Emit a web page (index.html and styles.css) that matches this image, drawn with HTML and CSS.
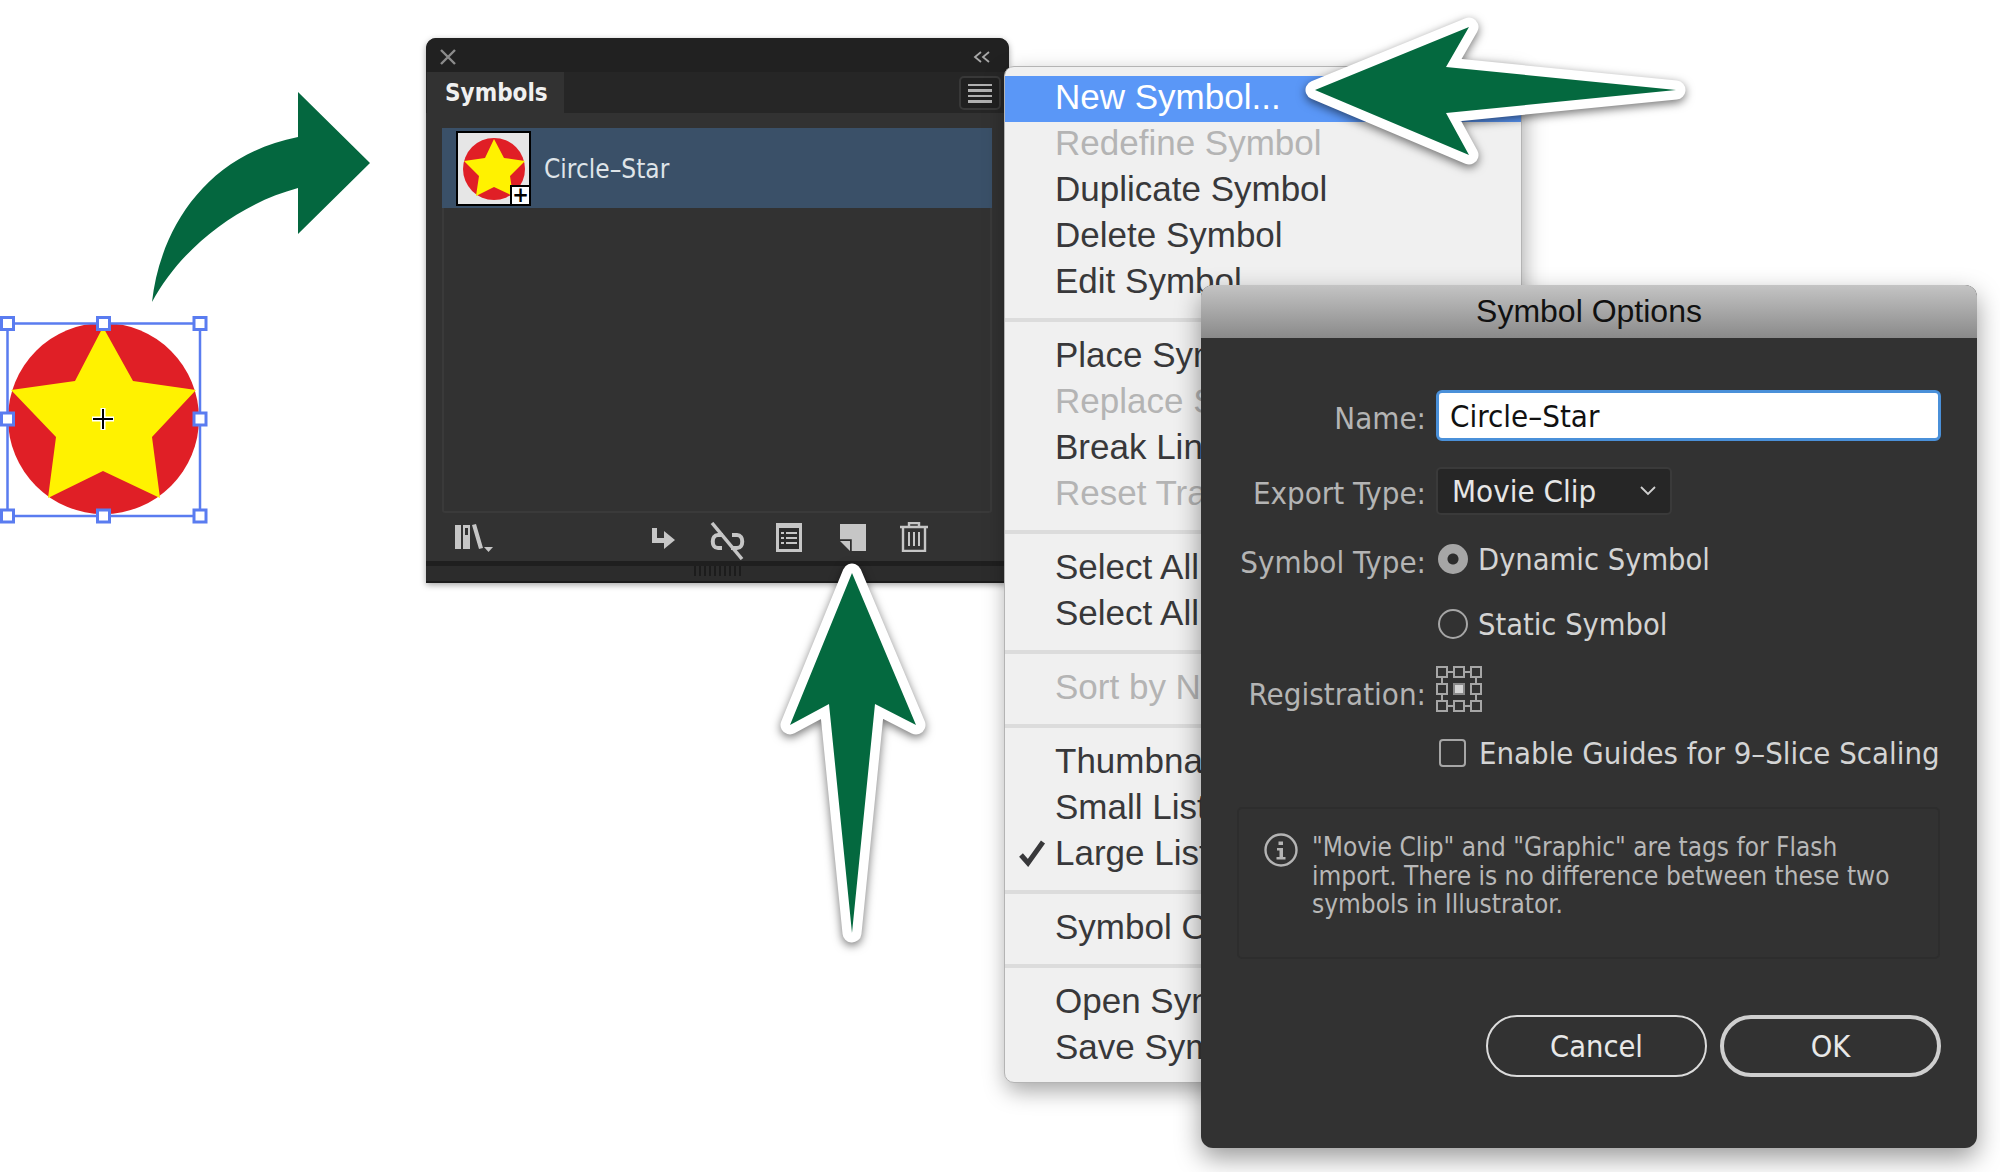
FILE: index.html
```html
<!DOCTYPE html>
<html lang="en">
<head>
  <meta charset="UTF-8">
  <title>Symbols panel - New Symbol</title>
  <link rel="stylesheet" href="styles.css">
</head>
<body>

  <!-- selected artwork and the curved arrow -->
  <svg class="art" width="400" height="540" viewBox="0 0 400 540">
    <path d="M152 302C160 230 205 155 298 137L298 92L370 163L298 234L298 188C235 205 180 250 152 302Z" fill="#04673f"/>
    <circle cx="103.500" cy="418.500" r="95.500" fill="#e01f26"/>
    <polygon points="103,327 133,381 196,390 152,437 160,498 103,471 48,498 56,437 11,390 75,381" fill="#fff200"/>
    <path d="M103 408V430M92 419H114" stroke="#fff" stroke-width="5"/>
    <path d="M103 409V429M93 419H113" stroke="#000" stroke-width="2"/>
    <g fill="#fff" stroke="#5a7cf0" stroke-width="3">
      <rect x="7.500" y="323.500" width="192.500" height="192.500" fill="none" stroke-width="2.500"/>
      <rect x="1.500" y="317.500" width="12" height="12"/>
      <rect x="97.500" y="317.500" width="12" height="12"/>
      <rect x="194" y="317.500" width="12" height="12"/>
      <rect x="1.500" y="413" width="12" height="12"/>
      <rect x="194" y="413" width="12" height="12"/>
      <rect x="1.500" y="510" width="12" height="12"/>
      <rect x="97.500" y="510" width="12" height="12"/>
      <rect x="194" y="510" width="12" height="12"/>
    </g>
  </svg>

  <!-- Symbols panel -->
  <div class="panel">
    <div class="panel-top">
      <svg width="16" height="16" viewBox="0 0 16 16"><path d="M1 1L15 15M15 1L1 15" stroke="#8c8c8c" stroke-width="2.400"/></svg>
      <svg width="18" height="12" viewBox="0 0 18 12"><path d="M8 1L2 6L8 11M16 1L10 6L16 11" fill="none" stroke="#a8a8a8" stroke-width="1.800"/></svg>
    </div>
    <div class="panel-tabs">
      <div class="panel-tab">Symbols</div>
      <div class="panel-menu-btn"><span></span><span></span><span></span><span></span></div>
    </div>
    <div class="symbol-list">
      <div class="symbol-row">
        <div class="thumb">
          <svg width="64" height="70" viewBox="0 0 64 70">
            <circle cx="32" cy="36" r="31" fill="#e01f26"/>
            <polygon points="32,6 42,25 63,28 48,43 51,63 32,54 14,63 17,43 2,28 23,25" fill="#fff200"/>
          </svg>
          <span class="thumb-plus">+</span>
        </div>
        <span class="symbol-name">Circle–Star</span>
      </div>
    </div>
    <div class="panel-tools">
      <svg class="tool-lib" width="38" height="28" viewBox="0 0 38 28" fill="#c6c6c6">
        <path d="M0 1H6V25H0ZM8 1H15V25H8ZM10 4V11H13V4ZM17 1L21 0L28 24L24 25Z"/>
        <path d="M29 23H38L33.500 28Z"/>
      </svg>
      <svg class="tool-place" width="24" height="22" viewBox="0 0 24 22" fill="#c6c6c6">
        <path d="M0 0H5V10H12V3L23 12L12 21V15H0Z"/>
      </svg>
      <svg class="tool-link" width="36" height="38" viewBox="0 0 36 38" fill="none" stroke="#c6c6c6">
        <path d="M14 13H9C2 13 2 26 9 26H13M23 13H28C35 13 35 26 28 26H22" stroke-width="4"/>
        <path d="M3 1L33 37" stroke-width="3.500"/>
      </svg>
      <svg class="tool-list" width="26" height="29" viewBox="0 0 26 29">
        <path d="M0 0H26V29H0Z" fill="#c6c6c6"/>
        <path d="M3 5H23V26H3Z" fill="#2c2c2c"/>
        <path d="M5 9H8V11H5ZM10 9H21V11H10ZM5 14H8V16H5ZM10 14H21V16H10ZM5 19H8V21H5ZM10 19H21V21H10Z" fill="#c6c6c6"/>
      </svg>
      <svg class="tool-new" width="26" height="27" viewBox="0 0 26 27">
        <path d="M0 0H26V27H11V16H0Z" fill="#c6c6c6"/>
        <path d="M0 17H10V27Z" fill="#c6c6c6"/>
        <path d="M0 16H11V27" fill="none" stroke="#2c2c2c" stroke-width="1.500"/>
      </svg>
      <svg class="tool-trash" width="28" height="30" viewBox="0 0 28 30" fill="none" stroke="#c6c6c6" stroke-width="2">
        <path d="M0 5H28M9 5V1H19V5" stroke-width="2.400"/>
        <path d="M3 5V29H25V5" stroke-width="2.400"/>
        <path d="M9 10V24M14 10V24M19 10V24"/>
      </svg>
    </div>
    <div class="panel-grip"><div class="grip-dots"></div></div>
  </div>

  <!-- panel menu -->
  <ul class="menu">
    <li class="menu-item active">New Symbol...</li>
    <li class="menu-item off">Redefine Symbol</li>
    <li class="menu-item">Duplicate Symbol</li>
    <li class="menu-item">Delete Symbol</li>
    <li class="menu-item">Edit Symbol</li>
    <li class="menu-sep"></li>
    <li class="menu-item">Place Symbol Instance</li>
    <li class="menu-item off">Replace Symbol</li>
    <li class="menu-item">Break Link to Symbol</li>
    <li class="menu-item off">Reset Transformation</li>
    <li class="menu-sep"></li>
    <li class="menu-item">Select All Unused</li>
    <li class="menu-item">Select All Instances</li>
    <li class="menu-sep"></li>
    <li class="menu-item off">Sort by Name</li>
    <li class="menu-sep"></li>
    <li class="menu-item">Thumbnail View</li>
    <li class="menu-item">Small List View</li>
    <li class="menu-item">
      <svg class="menu-check" width="28" height="28" viewBox="0 0 28 28"><path d="M3 16L10 24L25 3" fill="none" stroke="#38383a" stroke-width="5"/></svg>
      Large List View
    </li>
    <li class="menu-sep"></li>
    <li class="menu-item">Symbol Options...</li>
    <li class="menu-sep"></li>
    <li class="menu-item">Open Symbol Library</li>
    <li class="menu-item">Save Symbols...</li>
  </ul>

  <!-- Symbol Options dialog -->
  <div class="dialog">
    <div class="dialog-title">Symbol Options</div>
    <div class="form">
      <div class="row row-name">
        <label class="label label-name">Name:</label>
        <div class="input">Circle–Star</div>
      </div>
      <div class="row row-export">
        <label class="label label-name">Export Type:</label>
        <div class="select">
          <span>Movie Clip</span>
          <svg width="16" height="10" viewBox="0 0 16 10"><path d="M1 1L8 8L15 1" fill="none" stroke="#d0d0d0" stroke-width="1.800"/></svg>
        </div>
      </div>
      <div class="row">
        <label class="label label-low">Symbol Type:</label>
        <span class="radio checked"></span>
        <span class="option">Dynamic Symbol</span>
      </div>
      <div class="row">
        <span class="label"></span>
        <span class="radio"></span>
        <span class="option">Static Symbol</span>
      </div>
      <div class="row">
        <label class="label label-reg">Registration:</label>
        <svg class="reg-grid" width="46" height="46" viewBox="0 0 46 46" fill="none" stroke="#a6a6a6" stroke-width="2">
          <path d="M12 6H17M29 6H34M12 40H17M29 40H34M6 12V17M6 29V34M40 12V17M40 29V34"/>
          <rect x="1" y="1" width="10" height="10"/>
          <rect x="18" y="1" width="10" height="10"/>
          <rect x="35" y="1" width="10" height="10"/>
          <rect x="1" y="18" width="10" height="10"/>
          <rect x="18" y="18" width="10" height="10" fill="#d6d6d6" stroke="#8a8a8a"/>
          <rect x="35" y="18" width="10" height="10"/>
          <rect x="1" y="35" width="10" height="10"/>
          <rect x="18" y="35" width="10" height="10"/>
          <rect x="35" y="35" width="10" height="10"/>
        </svg>
      </div>
      <div class="row row-check">
        <span class="label"></span>
        <span class="checkbox"></span>
        <span class="option">Enable Guides for 9–Slice Scaling</span>
      </div>
    </div>
    <div class="info">
      <svg class="info-icon" width="34" height="34" viewBox="0 0 34 34">
        <circle cx="17" cy="17" r="15.500" fill="none" stroke="#b4b4b4" stroke-width="2.400"/>
        <path d="M14.500 8.500H19V12H14.500ZM13 15H19V24H21.500V26.500H12.500V24H15.500V17.500H13Z" fill="#b4b4b4"/>
      </svg>
      <p class="info-text">"Movie Clip" and "Graphic" are tags for Flash import. There is no difference between these two symbols in Illustrator.</p>
    </div>
    <div class="buttons">
      <button class="btn">Cancel</button>
      <button class="btn btn-ok">OK</button>
    </div>
  </div>

  <!-- callout arrows -->
  <svg class="callout callout-left" width="400" height="160" viewBox="1290 10 400 160">
    <polygon points="1315,90 1469,27 1446,67 1676,90 1446,113 1469,155" />
  </svg>
  <svg class="callout callout-up" width="160" height="400" viewBox="772 555 160 400">
    <polygon points="852,573 916,725 875,704 852,933 829,704 790,725" />
  </svg>

</body>
</html>
```

FILE: styles.css
```css
* {
  margin: 0;
  padding: 0;
  box-sizing: border-box;
}

body {
  position: relative;
  width: 2000px;
  height: 1172px;
  overflow: hidden;
  background: #fff;
  font-family: "DejaVu Sans", sans-serif;
  font-stretch: condensed;
}

.art {
  position: absolute;
  left: 0;
  top: 0;
}

/* panel */

.panel {
  position: absolute;
  left: 426px;
  top: 38px;
  width: 583px;
  height: 545px;
  display: flex;
  flex-direction: column;
  background: #323232;
  border-radius: 10px 10px 0 0;
  box-shadow: 0 2px 6px rgba(0, 0, 0, 0.35);
}

.panel-top {
  height: 34px;
  flex: none;
  display: flex;
  justify-content: space-between;
  align-items: center;
  padding: 4px 18px 0 14px;
  background: #212121;
  border-radius: 10px 10px 0 0;
}

.panel-tabs {
  height: 41px;
  flex: none;
  display: flex;
  justify-content: space-between;
  background: #262626;
  padding-left: 1px;
}

.panel-tab {
  width: 137px;
  padding-left: 18px;
  background: #323232;
  color: #f0f0f0;
  font-size: 24px;
  font-weight: bold;
  line-height: 42px;
}

.panel-menu-btn {
  width: 42px;
  height: 34px;
  margin: 4px 8px 0 0;
  display: flex;
  flex-direction: column;
  justify-content: center;
  gap: 3px;
  padding: 0 7px;
  background: #202020;
  border: 2px solid #383838;
  border-radius: 5px;
}

.panel-menu-btn span {
  height: 2.500px;
  background: #b0b0b0;
}

.symbol-list {
  height: 385px;
  flex: none;
  margin: 15px 17px 0 16px;
  border: 2px solid #3a3a3a;
  border-top: 0;
  border-radius: 0 0 3px 3px;
}

.symbol-row {
  height: 80px;
  display: flex;
  align-items: center;
  padding-left: 14px;
  margin: 0 -2px;
  background: #3a5068;
}

.thumb {
  position: relative;
  width: 75px;
  height: 75px;
  display: flex;
  align-items: center;
  justify-content: center;
  background: #e6e6e6;
  border: 2px solid #000;
}

.thumb-plus {
  position: absolute;
  right: -2px;
  bottom: -2px;
  width: 21px;
  height: 21px;
  background: #fff;
  border: 2px solid #000;
  color: #000;
  font-size: 22px;
  font-weight: bold;
  line-height: 15px;
  text-align: center;
}

.symbol-name {
  margin-left: 13px;
  padding-top: 2px;
  color: #dfe4e8;
  font-size: 26px;
}

.panel-tools {
  height: 48px;
  flex: none;
  position: relative;
}

/* toolbar icons sit at uneven spots, grouped left and right */
.panel-tools svg {
  position: absolute;
}

.tool-lib { left: 29px; top: 11px; }
.tool-place { left: 226px; top: 15px; }
.tool-link { left: 283px; top: 9px; }
.tool-list { left: 350px; top: 10px; }
.tool-new { left: 414px; top: 11px; }
.tool-trash { left: 474px; top: 9px; }

.panel-grip {
  flex: 1;
  display: flex;
  justify-content: center;
  background: #2c2c2c;
  border-top: 5px solid #1f1f1f;
  border-bottom: 2px solid #1c1c1c;
}

.grip-dots {
  width: 48px;
  height: 10px;
  background: repeating-linear-gradient(90deg, #1c1c1c 0 2px, #2c2c2c 2px 5px);
}

/* menu */

.menu {
  position: absolute;
  left: 1004px;
  top: 66px;
  width: 518px;
  height: 1017px;
  padding-top: 9px;
  list-style: none;
  background: #f0f0f0;
  border: 1px solid #b4b4b4;
  border-radius: 10px;
  box-shadow: 2px 8px 22px rgba(0, 0, 0, 0.35);
  font-family: "Liberation Sans", sans-serif;
  font-stretch: normal;
  font-size: 35px;
}

.menu-item {
  position: relative;
  height: 46px;
  padding-left: 50px;
  color: #38383a;
  line-height: 41px;
  white-space: nowrap;
}

.menu-item.active {
  background: #5a97f7;
  color: #fff;
}

.menu-item.off {
  color: #b4b4b4;
}

.menu-check {
  position: absolute;
  left: 13px;
  top: 7px;
}

.menu-sep {
  height: 4px;
  margin: 12px 0;
  background: #dcdcdc;
}

/* dialog */

.dialog {
  position: absolute;
  left: 1201px;
  top: 285px;
  width: 776px;
  height: 863px;
  background: #323232;
  border-radius: 12px;
  box-shadow: 0 10px 26px rgba(0, 0, 0, 0.4);
}

.dialog-title {
  height: 53px;
  background: linear-gradient(#c4c4c4, #8a8a8a);
  border-radius: 12px 12px 0 0;
  color: #111;
  font-family: "Liberation Sans", sans-serif;
  font-stretch: normal;
  font-size: 32px;
  line-height: 52px;
  text-align: center;
}

.form {
  display: flex;
  flex-direction: column;
  gap: 19px;
  padding-top: 52px;
}

.row {
  height: 46px;
  display: flex;
  align-items: center;
}

.row-name {
  height: 51px;
  margin-bottom: 7px;
}

.row-export {
  height: 48px;
  margin-bottom: 2px;
}

.row-check {
  margin-top: -1px;
}

.label {
  width: 225px;
  margin-right: 10px;
  flex: none;
  color: #b4b4b4;
  font-size: 31px;
  text-align: right;
}

.label-name {
  padding-top: 4px;
}

.label-low {
  padding-top: 6px;
}

.label-reg {
  padding-top: 9px;
}

.input {
  width: 505px;
  height: 51px;
  padding-left: 11px;
  background: #fff;
  border: 3px solid #4a90d9;
  border-radius: 6px;
  color: #111;
  font-size: 31px;
  line-height: 47px;
}

.select {
  width: 236px;
  height: 48px;
  display: flex;
  justify-content: space-between;
  align-items: center;
  padding: 0 14px 0 14px;
  background: #262626;
  border: 2px solid #3a3a3a;
  border-radius: 5px;
  color: #e6e6e6;
  font-size: 31px;
}

.radio {
  width: 30px;
  height: 30px;
  flex: none;
  margin: 0 10px 0 2px;
  border: 2px solid #a6a6a6;
  border-radius: 50%;
}

.radio.checked {
  background: radial-gradient(circle, #2c2c2c 0 5px, #a6a6a6 6px);
}

.checkbox {
  width: 27px;
  height: 28px;
  flex: none;
  margin: 0 13px 0 3px;
  border: 2px solid #a6a6a6;
  border-radius: 4px;
}

.option {
  color: #d4d4d4;
  font-size: 30.500px;
  white-space: nowrap;
}

.row-check .option {
  font-size: 30.800px;
}

.info {
  width: 703px;
  height: 152px;
  margin: 31px 0 0 36px;
  display: flex;
  padding: 24px 20px 0 25px;
  border: 2px solid #2d2d2d;
  border-radius: 5px;
}

.info-icon {
  flex: none;
  margin: 0 14px 0 0;
}

.info-text {
  width: 600px;
  color: #b8b8b8;
  font-size: 26px;
  line-height: 28.700px;
}

.buttons {
  display: flex;
  justify-content: flex-end;
  gap: 13px;
  padding-right: 36px;
  margin-top: 56px;
}

.btn {
  width: 221px;
  height: 62px;
  background: transparent;
  border: 2px solid #dcdcdc;
  border-radius: 31px;
  color: #e8e8e8;
  font-family: inherit;
  font-stretch: inherit;
  font-size: 30.500px;
}

.btn-ok {
  border: 4px solid #cfcfcf;
}

/* callouts */

.callout {
  position: absolute;
  overflow: visible;
  filter: drop-shadow(0 3px 5px rgba(0, 0, 0, 0.55));
}

.callout polygon {
  fill: #04693f;
  stroke: #fff;
  stroke-width: 19px;
  stroke-linejoin: round;
  paint-order: stroke;
}

.callout-left {
  left: 1290px;
  top: 10px;
}

.callout-up {
  left: 772px;
  top: 555px;
}
```
